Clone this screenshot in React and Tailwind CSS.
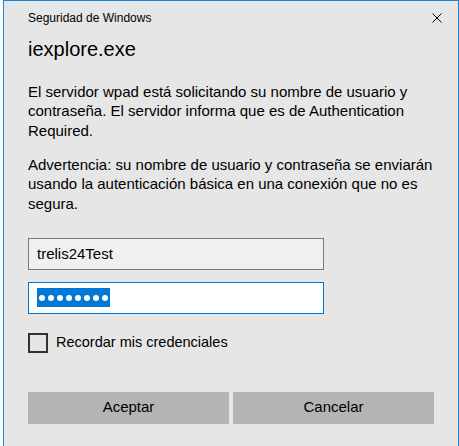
import React from "react";

export default function App() {
  const font = { fontFamily: '"Liberation Sans", Arial, sans-serif' };
  return (
    <div className="w-[459px] h-[446px] bg-white flex overflow-hidden" style={font}>
      <div className="ml-[3px] w-[456px] h-[460px] border-l border-t border-r border-[#1883d7] bg-[#e6e6e6] text-black flex flex-col">
        <div className="h-[34px] flex items-center justify-between pl-6 pr-4">
          <span className="text-[12px] leading-[16px]">Seguridad de Windows</span>
          <svg width="10" height="10" viewBox="0 0 10 10" className="block">
            <path d="M0.5 0.5 L9.5 9.5 M9.5 0.5 L0.5 9.5" stroke="#000" strokeWidth="1" />
          </svg>
        </div>
        <div className="px-6 flex flex-col">
          <div className="text-[20px] leading-[28px]">iexplore.exe</div>
          <p className="mt-[19px] text-[15px] leading-[19.33px] whitespace-nowrap">
            El servidor wpad está solicitando su nombre de usuario y<br />
            contraseña. El servidor informa que es de Authentication<br />
            Required.
          </p>
          <p className="mt-[15px] text-[15px] leading-[19.33px] whitespace-nowrap">
            Advertencia: su nombre de usuario y contraseña se enviarán<br />
            usando la autenticación básica en una conexión que no es<br />
            segura.
          </p>
          <div className="mt-[25px] w-[296px] h-[32px] border border-[#7a7a7a] bg-[#f0f0f0] flex items-center pl-2 text-[15px]">
            trelis24Test
          </div>
          <div className="mt-[12px] w-[296px] h-[32px] border border-[#0078d7] bg-white flex items-center pl-2">
            <div className="h-[19px] bg-[#0078d7] flex items-center gap-[3px] px-[2px]">
              {Array.from({ length: 8 }).map((_, i) => (
                <span key={i} className="w-[6px] h-[6px] rounded-full bg-white block" />
              ))}
            </div>
          </div>
          <div className="mt-[18px] flex items-center gap-2">
            <div className="w-[20px] h-[20px] border-2 border-[#333333]" />
            <span className="text-[14.5px]">Recordar mis credenciales</span>
          </div>
          <div className="mt-[38px] flex gap-[4px]">
            <div className="flex-1 h-[32px] bg-[#b4b4b4] flex items-center justify-center text-[15px]">Aceptar</div>
            <div className="flex-1 h-[32px] bg-[#b4b4b4] flex items-center justify-center text-[15px]">Cancelar</div>
          </div>
        </div>
      </div>
    </div>
  );
}
